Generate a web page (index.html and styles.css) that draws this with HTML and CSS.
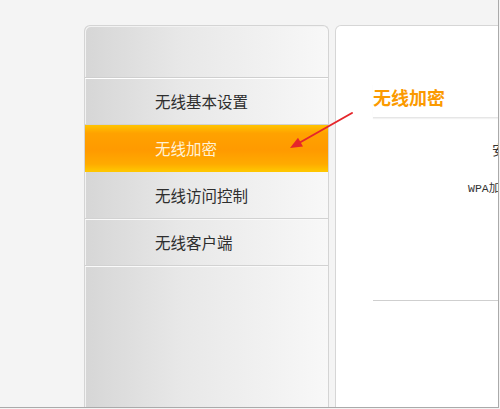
FILE: index.html
```html
<!DOCTYPE html>
<html>
<head>
  <meta charset="UTF-8">
  <title>无线加密</title>
  <link rel="stylesheet" href="styles.css">
</head>
<body>
  <div class="frame">
    <div class="menu">
      <div class="menu-head"></div>
      <ul class="menu-list">
        <li>无线基本设置</li>
        <li class="active">无线加密</li>
        <li>无线访问控制</li>
        <li>无线客户端</li>
      </ul>
    </div>
    <div class="panel">
      <h2 class="panel-title">无线加密</h2>
      <p class="opt">安</p>
      <p class="opt-mono">WPA加</p>
      <div class="rule"></div>
    </div>
    <svg class="arrow" width="500" height="409" viewBox="0 0 500 409">
      <line x1="352" y1="113" x2="299" y2="143" stroke="#e5262b" stroke-width="2" stroke-linecap="round"/>
      <polygon points="290,148 303,146.4 298,137.7" fill="#e5262b"/>
    </svg>
  </div>
</body>
</html>
```

FILE: styles.css
```css
* { box-sizing: border-box; }
body { margin:0;background:#f4f4f4;font-family:"Noto Sans CJK SC","Noto Sans",sans-serif; }
.frame { position:relative;display:flex;gap:6px;width:499px;height:408px;padding:25px 0 0 84px;overflow:hidden;border-right:1px solid #aaa;border-bottom:1px solid #aaa;background:#f4f4f4; }

.menu { flex:0 0 245px;border:1px solid #d4d4d4;border-bottom:none;border-radius:6px 6px 0 0;background:linear-gradient(to right,#d6d6d6,#e8e8e8 40%,#f8f8f8);box-shadow:inset 1px 1px 0 #f2f2f2; }
.menu-head { height:52px;border-bottom:1px solid #cfcfcf;box-shadow:0 1px 0 #fff; }
.menu-list { list-style:none;margin:0;padding:0; }
.menu-list li { height:47px;line-height:46px;padding-left:70px;font-size:15.5px;color:#2e2e2e;border-bottom:1px solid #d2d2d2;box-shadow:0 1px 0 #fafafa; }
.menu-list li.active { color:#fff2d6;background:linear-gradient(to bottom,#ffc400,#ffa200 18%,#ff9a00 55%,#ffab00 85%,#ffc600);border-bottom-color:#ffc600;box-shadow:none; }

.panel { flex:1;margin-right:-40px;background:#fff;border:1px solid #d6d6d6;border-bottom:none;border-radius:6px 6px 0 0;padding:58px 0 0 37px; }
.panel-title { margin:0;font-size:18px;font-weight:bold;color:#fb9a00;line-height:26px;padding-bottom:7px;border-bottom:1px solid #e6e6e6;box-shadow:0 1px 1px #f2f2f2; }
.opt { margin:22px 0 0 119px;font-size:14px;line-height:18px;color:#333; }
.opt-mono { margin:22px 0 0 95px;font-family:"Liberation Mono","Noto Sans CJK SC",monospace;font-size:11.5px;line-height:18px;color:#333; }
.rule { margin-top:102px;border-top:1px solid #cfcfcf; }

.arrow { position:absolute;left:0;top:0;pointer-events:none; }
```
